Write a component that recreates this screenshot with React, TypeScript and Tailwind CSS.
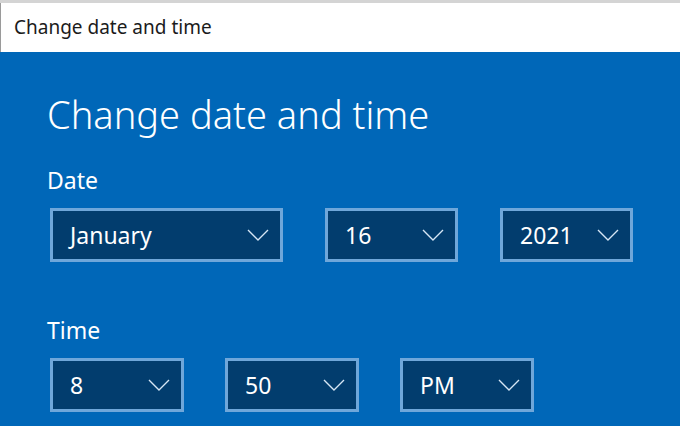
import React from "react";

function Chevron() {
  return (
    <svg width="22" height="12" viewBox="0 0 22 12" fill="none" className="shrink-0">
      <path d="M1 1 L11 11 L21 1" stroke="#d6e6f5" strokeWidth="1.4" />
    </svg>
  );
}

function Select({ value, width }: { value: string; width: string }) {
  return (
    <div
      className={`${width} h-[54px] border-[3px] border-[#6fa7da] bg-[#023d6e] flex items-center justify-between pl-[17px] pr-[11px] text-white text-[23px]`}
    >
      <span className="leading-none">{value}</span>
      <Chevron />
    </div>
  );
}

export default function App() {
  return (
    <div
      className="w-[680px] h-[426px] overflow-hidden flex flex-col bg-[#0067b8]"
      style={{ fontFamily: '"Noto Sans", "Open Sans", sans-serif' }}
    >
      <div className="h-[3px] bg-[#d4d4d4] shrink-0" />
      <div className="h-[49px] shrink-0 bg-white border-l border-[#9a9a9a] flex items-center pl-[13px] text-[19px] text-[#1b1b1b]">
        Change date and time
      </div>
      <div className="flex-1 pl-[47px] pt-[38px] text-white">
        <div className="text-[38px] leading-[48px] font-light">Change date and time</div>
        <div className="mt-[28px] text-[23px] leading-[28px]">Date</div>
        <div className="mt-[14px] flex gap-[42px] pl-[3px]">
          <Select value="January" width="w-[233px]" />
          <Select value="16" width="w-[133px]" />
          <Select value="2021" width="w-[133px]" />
        </div>
        <div className="mt-[54px] text-[23px] leading-[28px]">Time</div>
        <div className="mt-[14px] flex gap-[41px] pl-[3px]">
          <Select value="8" width="w-[134px]" />
          <Select value="50" width="w-[134px]" />
          <Select value="PM" width="w-[134px]" />
        </div>
      </div>
    </div>
  );
}
